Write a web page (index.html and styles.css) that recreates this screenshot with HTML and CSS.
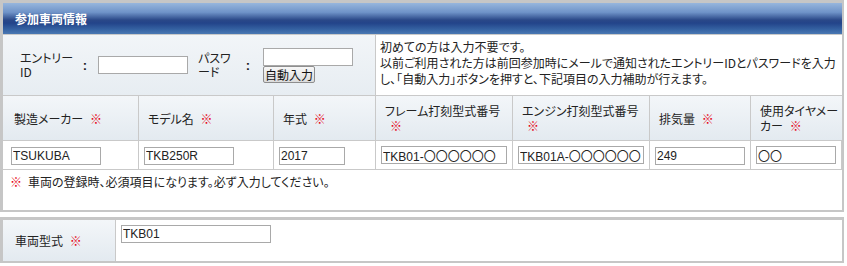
FILE: index.html
```html
<!DOCTYPE html>
<html lang="ja">
<head>
<meta charset="utf-8">
<title>参加車両情報</title>
<link rel="stylesheet" href="styles.css">
</head>
<body>
<div class="panel">
  <div class="panel-head">参加車両情報</div>
  <div class="login">
    <div class="login-form">
      <span class="lbl lbl-id">エントリー<br>ID</span>
      <span class="colon">:</span>
      <input class="txt txt-login" type="text">
      <span class="lbl lbl-pw">パスワ<br>ード</span>
      <span class="colon">:</span>
      <div class="pw-group">
        <input class="txt txt-pw" type="password">
        <button class="btn" type="button">自動入力</button>
      </div>
    </div>
    <div class="login-note">初めての方は入力不要です。<br>以前ご利用された方は前回参加時にメールで通知されたエントリーIDとパスワードを入力<br>し、「自動入力」ボタンを押すと、下記項目の入力補助が行えます。</div>
  </div>
  <div class="fields">
    <div class="th th-first"><span class="th-in">製造メーカー <span class="req">※</span></span></div>
    <div class="th"><span class="th-in">モデル名 <span class="req">※</span></span></div>
    <div class="th"><span class="th-in">年式 <span class="req">※</span></span></div>
    <div class="th"><span class="th-in">フレーム打刻型式番号<br><span class="req req-wrap">※</span></span></div>
    <div class="th"><span class="th-in">エンジン打刻型式番号<br><span class="req req-wrap">※</span></span></div>
    <div class="th"><span class="th-in">排気量 <span class="req">※</span></span></div>
    <div class="th th-last"><span class="th-in">使用タイヤメー<br>カー <span class="req">※</span></span></div>
    <div class="td td-first"><input class="txt w90" type="text" value="TSUKUBA"></div>
    <div class="td"><input class="txt w90" type="text" value="TKB250R"></div>
    <div class="td"><input class="txt w66" type="text" value="2017"></div>
    <div class="td"><input class="txt wfull" type="text" value="TKB01-〇〇〇〇〇〇"></div>
    <div class="td"><input class="txt wfull" type="text" value="TKB01A-〇〇〇〇〇〇"></div>
    <div class="td"><input class="txt wfull" type="text" value="249"></div>
    <div class="td td-last"><input class="txt wfull" type="text" value="〇〇"></div>
  </div>
  <div class="note"><span class="req-lead">※</span>車両の登録時、必須項目になります。必ず入力してください。</div>
</div>
<div class="panel panel-second">
  <div class="row">
    <div class="row-th"><span class="th-in">車両型式 <span class="req">※</span></span></div>
    <div class="row-td"><input class="txt w150" type="text" value="TKB01"></div>
  </div>
</div>
</body>
</html>
```
FILE: styles.css
```css
* {
  box-sizing: border-box;
}

body {
  margin: 0;
  background: #fff;
  color: #222;
  font-family: "Noto Sans CJK JP", sans-serif;
  font-size: 12px;
  font-feature-settings: "palt";
}

.panel {
  width: 844px;
  border-style: solid;
  border-color: #c6c6c6;
  border-width: 3px 2px 2px 3px;
  background: #fff;
}

.panel-head {
  height: 32px;
  border-bottom: 1px solid #c9c9c9;
  padding-left: 12px;
  line-height: 31px;
  color: #fff;
  font-weight: bold;
  background: linear-gradient(#97b6dd 0%, #6f93c8 30%, #2a4888 55%, #23448a 65%, #3562a2 85%, #4a78b3 100%);
}

.login {
  display: flex;
  height: 61px;
  border-bottom: 1px solid #c9c9c9;
}

.login-form {
  width: 373px;
  display: flex;
  align-items: center;
  padding-left: 17px;
  border-right: 1px solid #c9c9c9;
  background: linear-gradient(#f2f5f8, #e7edf2);
}

.login-form > * {
  flex: none;
}

.txt {
  height: 18px;
  margin: 0;
  padding: 0 0 0 1px;
  border: 1px solid #a9a9a9;
  background: #fff;
  color: #222;
  font-family: "Liberation Sans", "Noto Sans CJK JP", sans-serif;
  font-size: 12px;
  font-feature-settings: normal;
  outline: none;
}

.lbl {
  line-height: 14px;
}

.lbl-id {
  width: 58px;
}

.lbl-pw {
  width: 43px;
  margin-left: 10px;
}

.colon {
  width: 14px;
  text-align: center;
  font-family: "Liberation Sans", sans-serif;
  font-weight: bold;
  font-size: 13px;
}

.txt-login {
  width: 90px;
  margin-left: 6px;
}

.txt-pw {
  width: 90px;
}

.pw-group {
  display: flex;
  flex-direction: column;
  align-items: flex-start;
  margin-left: 8px;
}

.btn {
  width: 52px;
  height: 17px;
  margin: 0;
  padding: 0;
  border: 1px solid #8e8e8e;
  border-radius: 2px;
  background: linear-gradient(#f7f7f7, #dcdcdc);
  color: #111;
  font-family: "Noto Sans CJK JP", sans-serif;
  font-size: 12px;
  line-height: 15px;
}

.login-note {
  flex: 1;
  padding: 4px 0 0 4px;
  line-height: 16px;
  background: #fff;
}

.fields {
  display: grid;
  grid-template-columns: 136px 135px 102px 137px 137px 101px 91px;
}

.th {
  height: 45px;
  display: flex;
  align-items: center;
  padding-left: 9px;
  border-right: 1px solid #c9c9c9;
  border-bottom: 1px solid #c9c9c9;
  background: linear-gradient(#f3f6f9, #e3eaf0);
}

.th-in {
  display: block;
  line-height: 15px;
}

.th-first {
  padding-left: 11px;
}

.th-last,
.td-last {
  border-right: 0;
}

.req {
  color: #e60012;
  margin-left: 4px;
}

.req-wrap {
  margin-left: 5px;
}

.td {
  height: 29px;
  padding: 5px 5px 0;
  border-right: 1px solid #c9c9c9;
  border-bottom: 1px solid #c9c9c9;
}

.td-first {
  padding-left: 8px;
}

.w90 {
  width: 90px;
}

.w66 {
  width: 66px;
}

.wfull {
  width: 100%;
}

.w150 {
  width: 150px;
}

.note {
  height: 40px;
  padding: 4px 7px;
  line-height: 16px;
}

.req-lead {
  color: #e60012;
  margin-right: 6px;
}

.panel-second {
  margin-top: 5px;
}

.row {
  display: flex;
  height: 41px;
}

.row-th {
  width: 113px;
  display: flex;
  align-items: center;
  padding-left: 12px;
  border-right: 1px solid #c9c9c9;
  background: linear-gradient(#f3f6f9, #e3eaf0);
}

.row-td {
  flex: 1;
  padding: 4px 5px 0;
}
```
